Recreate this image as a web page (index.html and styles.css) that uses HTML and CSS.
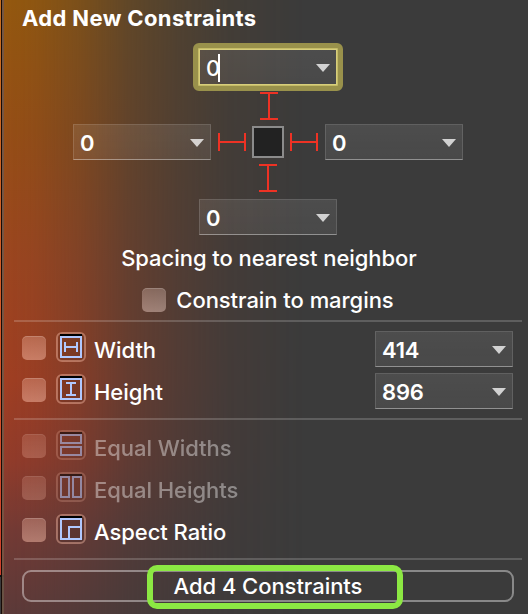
FILE: index.html
```html
<!DOCTYPE html>
<html lang="en">
<head>
<meta charset="utf-8">
<title>Add New Constraints</title>
<link rel="stylesheet" href="styles.css">
</head>
<body>
<div class="edge"></div>
<main class="panel">
  <h1 class="title">Add New Constraints</h1>
  <section class="spacing">
    <div class="combo focused"><span class="value">0</span><i class="caret"></i><i class="arrow"></i></div>
    <svg class="strut top" width="18" height="28"><path d="M0 1H18M0 27H18M9 1V27"/></svg>
    <div class="middle">
      <div class="combo"><span class="value">0</span><i class="arrow"></i></div>
      <svg class="strut" width="28" height="18"><path d="M1 0V18M27 0V18M1 9H27"/></svg>
      <div class="view"></div>
      <svg class="strut" width="28" height="18"><path d="M1 0V18M27 0V18M1 9H27"/></svg>
      <div class="combo"><span class="value">0</span><i class="arrow"></i></div>
    </div>
    <svg class="strut bottom" width="18" height="28"><path d="M0 1H18M0 27H18M9 1V27"/></svg>
    <div class="combo"><span class="value">0</span><i class="arrow"></i></div>
    <p class="caption">Spacing to nearest neighbor</p>
    <div class="margins"><i class="check"></i><span>Constrain to margins</span></div>
  </section>
  <section class="group size">
    <div class="row"><i class="check"></i>
      <svg class="icon" width="30" height="30"><rect class="frame" x="1" y="1" width="28" height="28" rx="5"/><path class="shade" d="M4 3H26"/><path class="line" d="M5 5H25V25H5ZM9 10V20M21 10V20M9 15H21"/></svg>
      <span class="label">Width</span><div class="combo"><span class="value">414</span><i class="arrow"></i></div></div>
    <div class="row"><i class="check"></i>
      <svg class="icon" width="30" height="30"><rect class="frame" x="1" y="1" width="28" height="28" rx="5"/><path class="shade" d="M4 3H26"/><path class="line" d="M5 5H25V25H5ZM10 9H20M10 21H20M15 9V21"/></svg>
      <span class="label">Height</span><div class="combo"><span class="value">896</span><i class="arrow"></i></div></div>
  </section>
  <section class="group relation">
    <div class="row disabled"><i class="check"></i>
      <svg class="icon" width="30" height="30"><rect class="frame" x="1" y="1" width="28" height="28" rx="5"/><path class="shade" d="M4 3H26"/><path class="line" d="M5 5H25V13H5ZM5 17H25V25H5Z"/></svg>
      <span class="label">Equal Widths</span></div>
    <div class="row disabled"><i class="check"></i>
      <svg class="icon" width="30" height="30"><rect class="frame" x="1" y="1" width="28" height="28" rx="5"/><path class="shade" d="M4 3H26"/><path class="line" d="M5 5H13V25H5ZM17 5H25V25H17Z"/></svg>
      <span class="label">Equal Heights</span></div>
    <div class="row"><i class="check"></i>
      <svg class="icon" width="30" height="30"><rect class="frame" x="1" y="1" width="28" height="28" rx="5"/><path class="shade" d="M4 3H26"/><path class="line" d="M5 5H25V25H5ZM13 25V13H25"/></svg>
      <span class="label">Aspect Ratio</span></div>
  </section>
  <section class="group footer">
    <button class="submit">Add 4 Constraints<i class="highlight"></i></button>
  </section>
</main>
</body>
</html>
```
FILE: styles.css
```css
* { box-sizing: border-box; }
body {
  margin: 0; width: 528px; height: 614px; overflow: hidden; display: flex;
  background: #3b3b3b; color: #fff;
  font: 500 22px Inter, "Liberation Sans", sans-serif;
  letter-spacing: -.05px;
}
i { display: block; }
.edge {
  width: 4px; flex: none;
  background:
    linear-gradient(90deg, transparent 1px, #170b06 1px 2px, transparent 2px),
    linear-gradient(90deg, transparent 2px, rgba(110,84,68,.9) 2px),
    linear-gradient(#c8701f, #d6552b 60%, #cf3f2c 575px, #111 575px 577px, #3a3a3c 577px);
}
.panel { position: relative; flex: 1; padding: 0 6px 0 10px; }
.panel::before {
  content: ""; position: absolute; inset: 0; z-index: -1;
  background: linear-gradient(#94580e, #964e15 130px, #9c451f 260px, #a03e22 380px, #923b2a 460px, #743a34 530px, #5c3a39 614px);
  mask-image: linear-gradient(90deg, #000, rgba(0,0,0,.93) 30px, rgba(0,0,0,.72) 75px, rgba(0,0,0,.42) 125px, rgba(0,0,0,.23) 175px, rgba(0,0,0,.09) 225px, transparent 300px);
}
.title { margin: 0; padding: 4px 0 0 8px; height: 49px; font-size: 22px; line-height: 28px; font-weight: 700; letter-spacing: .37px; }
.spacing { display: flex; flex-direction: column; align-items: center; height: 271px; }
.combo {
  position: relative; flex: none; width: 138px; height: 36px; padding: 2px 6px 0 6px;
  display: flex; align-items: center; justify-content: space-between;
  background: linear-gradient(rgba(255,255,255,.09), rgba(255,255,255,.07));
  border: 1px solid rgba(255,255,255,.13); border-bottom-color: rgba(255,255,255,.38);
  line-height: 32px;
}
.combo.focused { border: 1px solid #d7ce7c; outline: 1px solid #c4bb66; }
.combo.focused::before { content: ""; position: absolute; inset: -7px; border: 5px solid #99914b; border-radius: 6px; }
.value { font-weight: 600; letter-spacing: -.2px; }
.focused .value { font-weight: 500; }
.caret { position: absolute; left: 18px; top: 4px; width: 2px; height: 28px; background: #fff; }
.arrow { width: 14px; height: 8px; background: rgba(255,255,255,.75); clip-path: polygon(0 0, 100% 0, 50% 100%); }
.strut { flex: none; fill: none; stroke: #ee3224; stroke-width: 2; }
.strut.top { margin: 7px 0 4px 2px; }
.strut.bottom { margin: 4px 0 7px; }
.middle { display: flex; align-items: center; width: 390px; justify-content: space-between; }
.middle .strut:nth-child(2) { margin-left: 1px; }
.middle .strut:nth-child(4) { margin-right: 1px; }
.view { width: 32px; height: 32px; background: #222; border: 2px solid #8b8b8b; }
.caption { margin: 9px 0 0 2px; line-height: 28px; }
.margins { display: flex; align-items: center; gap: 10px; margin-top: 14px; height: 28px; line-height: 28px; }
.check {
  flex: none; width: 24px; height: 24px; border-radius: 5px;
  background: linear-gradient(rgba(255,195,175,.3), rgba(255,195,175,.47));
  box-shadow: inset 0 1px rgba(255,255,255,.18);
}
.margins .check { background: linear-gradient(rgba(255,225,215,.26), rgba(255,225,215,.42)); }
.group { border-top: 2px solid rgba(255,255,255,.18); padding: 5px 9px 0 8px; }
.size { height: 98px; }
.relation { height: 140px; }
.row { display: flex; align-items: center; height: 42px; }
.icon { margin: -2px 8px 0 10px; flex: none; fill: none; stroke-width: 2; }
.frame { stroke: rgba(255,195,175,.42); fill: rgba(0,0,0,.08); }
.shade { stroke: #000; }
.line { stroke: #b0c8ff; }
.label { flex: 1; padding-top: 4px; line-height: 28px; }
.row .combo { top: 1px; }
.disabled .check, .disabled .icon { opacity: .55; }
.disabled .label { opacity: .4; }
.footer { padding: 10px 8px 0; }
.submit {
  position: relative; display: block; width: 492px; height: 32px; padding: 0;
  background: none; border: 2px solid rgba(255,255,255,.4); border-radius: 9px;
  font: inherit; letter-spacing: inherit; color: inherit; line-height: 28px;
}
.highlight { position: absolute; left: 123px; top: -7px; width: 256px; height: 44px; border: 6px solid #8ce843; border-radius: 10px; }
```
